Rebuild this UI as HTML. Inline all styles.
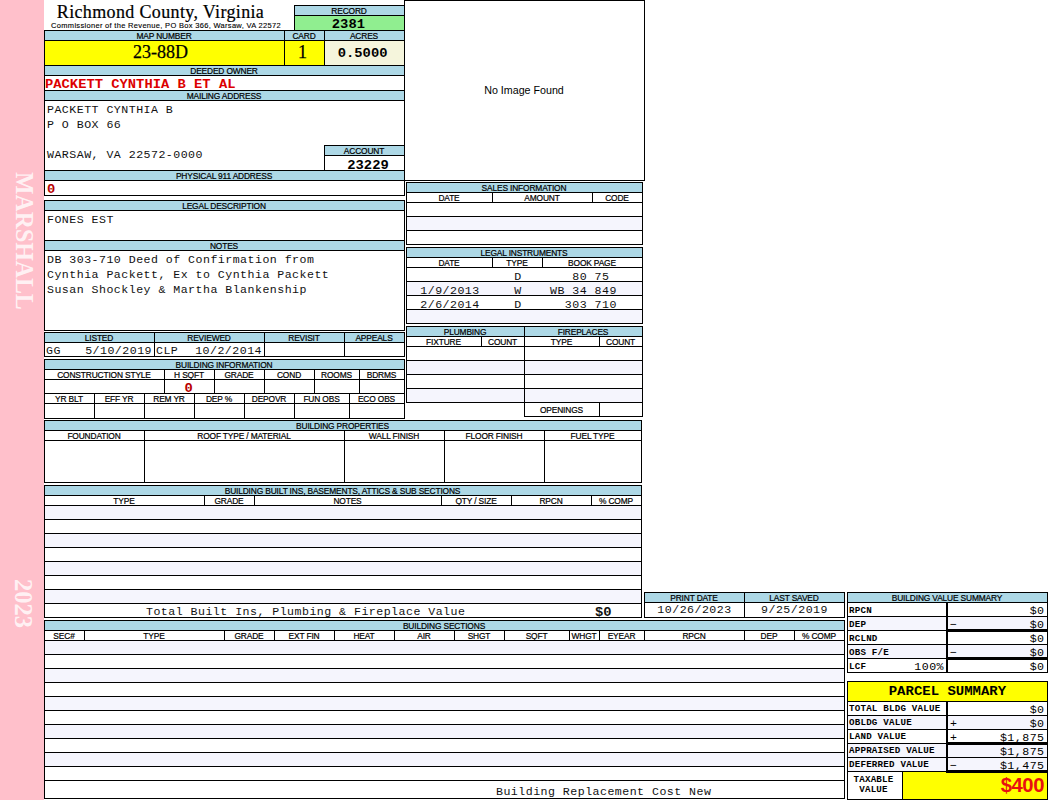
<!DOCTYPE html>
<html lang="en">
<head>
<meta charset="utf-8">
<title>Richmond County, Virginia - Property Card 23-88D</title>
<style>
html,body{margin:0;padding:0;background:#fff}
body{width:1050px;height:800px;position:relative;overflow:hidden;font-family:"Liberation Sans",sans-serif;color:#000}
.c{position:absolute;box-sizing:border-box;border:1px solid #000;background:#fff;overflow:hidden;white-space:nowrap}
.c p{margin:0}
.h{background:#ADD8E6;font-size:8.4px;line-height:8px;text-align:center;letter-spacing:-0.15px;-webkit-text-stroke:0.2px #000}
.h span{position:relative;top:1.0px;left:-0.5px} .op span{top:3px}
.w{background:#fff}
.t{background:#F5F5FD}
.y{background:#FFFF00}
.g{background:#90EE90}
.bg{background:#F5F5DC}
.side{position:absolute;left:0;top:0;width:44px;height:800px;background:#FFC0CB}
.vt{position:absolute;font-family:"Liberation Serif",serif;color:rgba(255,255,255,.8);white-space:nowrap;transform-origin:0 0;transform:rotate(90deg);line-height:1}
.v1{left:36.9px;top:172px;font-size:23.85px;font-weight:bold;transform:rotate(90deg) scale(1,1.1)}
.v2{left:35px;top:579px;font-size:24.5px;font-weight:bold}
.title{position:absolute;left:44.5px;top:1.5px;width:232px;text-align:center;font-family:"Liberation Serif",serif;font-size:18px;letter-spacing:0.35px;line-height:20px;white-space:nowrap;-webkit-text-stroke:0.2px #000}
.sub{position:absolute;left:44px;top:21px;width:244px;text-align:center;font-size:7.5px;letter-spacing:0.31px;line-height:9px;white-space:nowrap;-webkit-text-stroke:0.12px #000}
.m{font-family:"Liberation Mono",monospace;font-size:11.6px;letter-spacing:0.47px;color:#111}
.mb{font-family:"Liberation Mono",monospace;font-weight:bold;font-size:12.0px;letter-spacing:0px}
.ctr{text-align:center}
.lft{text-align:left;padding-left:0px}
.red{color:#DC0000} .dk{color:#B80000} .z span{left:1.5px}
.big{font-family:"Liberation Serif",serif;font-size:18px;line-height:23px;-webkit-text-stroke:0.25px #000}
.big span{position:relative;top:0px;left:-4px} .big+.big span{left:-2px}
.mb span{position:relative;display:inline-block;transform:scaleX(1.15)} .mb.lft span{transform-origin:0 50%}
.g.mb{line-height:13px} .g.mb span{top:3px;left:-1px}
.bg.mb{line-height:23px} .bg.mb span{top:1.5px;left:-2px}
.mb.lft{line-height:13px} .mb.lft span{top:3px}
.mb.ctr{line-height:13px} .mb.ctr span{top:3.5px;left:3.5px}
.bg.mb.ctr{line-height:23px} .bg.mb.ctr span{top:1.5px;left:-2px} .g.mb.ctr span{top:3px;left:-1px}
.addr{padding:1px 0 0 2px;line-height:15px;white-space:pre}
.lr{line-height:13px}
.lr span:first-child{position:absolute;left:1px;top:1px}
.lr span:last-child{position:absolute;right:2px;top:1px}
.hs{line-height:12px} .mb.ctr.hs span{top:2.5px;left:-1px}
.tot{line-height:13px}
.tot .tl{position:absolute;left:101px;top:1px}
.tot .tv{position:absolute;left:550px;top:2.5px;font-weight:bold;font-size:12.0px;letter-spacing:0px;transform:scaleX(1.15);transform-origin:0 50%}
.img{font-size:10.7px;text-align:center;line-height:179px;text-indent:-1px}
.li{line-height:13px;white-space:pre}
.li span{top:2px}
.li .d{position:absolute;left:0;width:86px;text-align:center}
.li .ty{position:absolute;left:86px;width:50px;text-align:center}
.li .bp{position:absolute;left:143px}
.brc{line-height:19px}
.brc span{position:absolute;left:451px;top:1px}
.sl,.sv{font-family:"Liberation Mono",monospace;line-height:13px}
.sl{font-weight:bold;font-size:9.2px;letter-spacing:0.2px}
.sl .l{position:absolute;left:1px;top:1px}
.pl .l{top:0px !important} .sl .p{position:absolute;right:3px;top:1px;font-weight:normal;font-size:11.6px;letter-spacing:0.47px}
.sv{font-size:11.6px;letter-spacing:0.47px}
.sv .s{position:absolute;left:3px;top:1px}
.sv .v{position:absolute;right:2.5px;top:1px}
.ps{font-family:"Liberation Mono",monospace;font-weight:bold;font-size:12px;line-height:18px}
.ps span{position:relative;top:1px;display:inline-block;transform:scaleX(1.164)}
.tx{font-family:"Liberation Mono",monospace;font-weight:bold;font-size:9.2px;letter-spacing:0.2px;line-height:10px;text-align:center;padding:3px 3px 0 0}
.tv400{font-weight:bold;font-size:20.3px;letter-spacing:-0.45px;color:#E81010;text-align:right;padding-right:3px;line-height:26px}
.tk{position:absolute;background:#000}
</style>
</head>
<body>
<div class="side"></div>
<div class="vt v1">MARSHALL</div>
<div class="vt v2">2023</div>
<div class="title">Richmond County, Virginia</div>
<div class="sub">Commissioner of the Revenue, PO Box 366, Warsaw, VA 22572</div>
<div class="c h" style="left:294px;top:5px;width:111px;height:11px;"><span>RECORD</span></div>
<div class="c g mb ctr" style="left:294px;top:15px;width:111px;height:16px;"><span>2381</span></div>
<div class="c h" style="left:44px;top:30px;width:241px;height:11px;"><span>MAP NUMBER</span></div>
<div class="c h" style="left:284px;top:30px;width:41px;height:11px;"><span>CARD</span></div>
<div class="c h" style="left:324px;top:30px;width:81px;height:11px;"><span>ACRES</span></div>
<div class="c y big ctr" style="left:44px;top:40px;width:241px;height:26px;"><span>23-88D</span></div>
<div class="c y big ctr" style="left:284px;top:40px;width:41px;height:26px;"><span>1</span></div>
<div class="c bg mb ctr" style="left:324px;top:40px;width:81px;height:26px;"><span>0.5000</span></div>
<div class="c h" style="left:44px;top:65px;width:361px;height:11px;"><span>DEEDED OWNER</span></div>
<div class="c mb red lft" style="left:44px;top:75px;width:361px;height:16px;"><span>PACKETT CYNTHIA B ET AL</span></div>
<div class="c h" style="left:44px;top:90px;width:361px;height:11px;"><span>MAILING ADDRESS</span></div>
<div class="c m addr" style="left:44px;top:100px;width:361px;height:71px;"><p>PACKETT CYNTHIA B</p><p>P O BOX 66</p><p>&nbsp;</p><p>WARSAW, VA 22572-0000</p></div>
<div class="c h" style="left:324px;top:145px;width:81px;height:11px;"><span>ACCOUNT</span></div>
<div class="c mb ctr" style="left:324px;top:155px;width:81px;height:16px;"><span>23229</span></div>
<div class="c h" style="left:44px;top:170px;width:361px;height:11px;"><span>PHYSICAL 911 ADDRESS</span></div>
<div class="c mb red dk lft z" style="left:44px;top:180px;width:361px;height:16px;"><span>0</span></div>
<div class="c h" style="left:44px;top:200px;width:361px;height:11px;"><span>LEGAL DESCRIPTION</span></div>
<div class="c m addr legal" style="left:44px;top:210px;width:361px;height:31px;"><p>FONES EST</p></div>
<div class="c h" style="left:44px;top:240px;width:361px;height:11px;"><span>NOTES</span></div>
<div class="c m addr notes" style="left:44px;top:250px;width:361px;height:81px;"><p>DB 303-710 Deed of Confirmation from</p><p>Cynthia Packett, Ex to Cynthia Packett</p><p>Susan Shockley &amp; Martha Blankenship</p></div>
<div class="c h" style="left:44px;top:332px;width:111px;height:11px;"><span>LISTED</span></div>
<div class="c h" style="left:154px;top:332px;width:111px;height:11px;"><span>REVIEWED</span></div>
<div class="c h" style="left:264px;top:332px;width:81px;height:11px;"><span>REVISIT</span></div>
<div class="c h" style="left:344px;top:332px;width:61px;height:11px;"><span>APPEALS</span></div>
<div class="c m lr" style="left:44px;top:342px;width:111px;height:15px;"><span>GG</span><span>5/10/2019</span></div>
<div class="c m lr" style="left:154px;top:342px;width:111px;height:15px;"><span>CLP</span><span>10/2/2014</span></div>
<div class="c " style="left:264px;top:342px;width:81px;height:15px;"></div>
<div class="c " style="left:344px;top:342px;width:61px;height:15px;"></div>
<div class="c h" style="left:44px;top:359px;width:361px;height:11px;"><span>BUILDING INFORMATION</span></div>
<div class="c h w" style="left:44px;top:369px;width:121px;height:11px;"><span>CONSTRUCTION STYLE</span></div>
<div class="c h w" style="left:164px;top:369px;width:51px;height:11px;"><span>H SQFT</span></div>
<div class="c h w" style="left:214px;top:369px;width:51px;height:11px;"><span>GRADE</span></div>
<div class="c h w" style="left:264px;top:369px;width:51px;height:11px;"><span>COND</span></div>
<div class="c h w" style="left:314px;top:369px;width:46px;height:11px;"><span>ROOMS</span></div>
<div class="c h w" style="left:359px;top:369px;width:46px;height:11px;"><span>BDRMS</span></div>
<div class="c mb red dk ctr hs" style="left:44px;top:379px;width:121px;height:15px;"></div>
<div class="c mb red dk ctr hs" style="left:164px;top:379px;width:51px;height:15px;"><span>0</span></div>
<div class="c mb red dk ctr hs" style="left:214px;top:379px;width:51px;height:15px;"></div>
<div class="c mb red dk ctr hs" style="left:264px;top:379px;width:51px;height:15px;"></div>
<div class="c mb red dk ctr hs" style="left:314px;top:379px;width:46px;height:15px;"></div>
<div class="c mb red dk ctr hs" style="left:359px;top:379px;width:46px;height:15px;"></div>
<div class="c h w" style="left:44px;top:393px;width:51px;height:11px;"><span>YR BLT</span></div>
<div class="c h w" style="left:94px;top:393px;width:51px;height:11px;"><span>EFF YR</span></div>
<div class="c h w" style="left:144px;top:393px;width:51px;height:11px;"><span>REM YR</span></div>
<div class="c h w" style="left:194px;top:393px;width:51px;height:11px;"><span>DEP %</span></div>
<div class="c h w" style="left:244px;top:393px;width:51px;height:11px;"><span>DEPOVR</span></div>
<div class="c h w" style="left:294px;top:393px;width:56px;height:11px;"><span>FUN OBS</span></div>
<div class="c h w" style="left:349px;top:393px;width:56px;height:11px;"><span>ECO OBS</span></div>
<div class="c " style="left:44px;top:403px;width:51px;height:16px;"></div>
<div class="c " style="left:94px;top:403px;width:51px;height:16px;"></div>
<div class="c " style="left:144px;top:403px;width:51px;height:16px;"></div>
<div class="c " style="left:194px;top:403px;width:51px;height:16px;"></div>
<div class="c " style="left:244px;top:403px;width:51px;height:16px;"></div>
<div class="c " style="left:294px;top:403px;width:56px;height:16px;"></div>
<div class="c " style="left:349px;top:403px;width:56px;height:16px;"></div>
<div class="c h" style="left:44px;top:420px;width:598px;height:11px;"><span>BUILDING PROPERTIES</span></div>
<div class="c h w" style="left:44px;top:430px;width:101px;height:11px;"><span>FOUNDATION</span></div>
<div class="c h w" style="left:144px;top:430px;width:201px;height:11px;"><span>ROOF TYPE / MATERIAL</span></div>
<div class="c h w" style="left:344px;top:430px;width:101px;height:11px;"><span>WALL FINISH</span></div>
<div class="c h w" style="left:444px;top:430px;width:101px;height:11px;"><span>FLOOR FINISH</span></div>
<div class="c h w" style="left:544px;top:430px;width:98px;height:11px;"><span>FUEL TYPE</span></div>
<div class="c " style="left:44px;top:440px;width:101px;height:43px;"></div>
<div class="c " style="left:144px;top:440px;width:201px;height:43px;"></div>
<div class="c " style="left:344px;top:440px;width:101px;height:43px;"></div>
<div class="c " style="left:444px;top:440px;width:101px;height:43px;"></div>
<div class="c " style="left:544px;top:440px;width:98px;height:43px;"></div>
<div class="c h" style="left:44px;top:485px;width:598px;height:11px;"><span>BUILDING BUILT INS, BASEMENTS, ATTICS &amp; SUB SECTIONS</span></div>
<div class="c h w" style="left:44px;top:495px;width:161px;height:11px;"><span>TYPE</span></div>
<div class="c h w" style="left:204px;top:495px;width:51px;height:11px;"><span>GRADE</span></div>
<div class="c h w" style="left:254px;top:495px;width:188px;height:11px;"><span>NOTES</span></div>
<div class="c h w" style="left:441px;top:495px;width:71px;height:11px;"><span>QTY / SIZE</span></div>
<div class="c h w" style="left:511px;top:495px;width:81px;height:11px;"><span>RPCN</span></div>
<div class="c h w" style="left:591px;top:495px;width:51px;height:11px;"><span>% COMP</span></div>
<div class="c t" style="left:44px;top:505px;width:598px;height:15px;"></div>
<div class="c " style="left:44px;top:519px;width:598px;height:15px;"></div>
<div class="c t" style="left:44px;top:533px;width:598px;height:15px;"></div>
<div class="c " style="left:44px;top:547px;width:598px;height:15px;"></div>
<div class="c t" style="left:44px;top:561px;width:598px;height:15px;"></div>
<div class="c " style="left:44px;top:575px;width:598px;height:15px;"></div>
<div class="c t" style="left:44px;top:589px;width:598px;height:15px;"></div>
<div class="c m tot" style="left:44px;top:603px;width:598px;height:15px;"><span class="tl">Total Built Ins, Plumbing &amp; Fireplace Value</span><span class="tv">$0</span></div>
<div class="c img" style="left:404px;top:0px;width:241px;height:181px;"><span>No Image Found</span></div>
<div class="c h" style="left:406px;top:182px;width:237px;height:11px;"><span>SALES INFORMATION</span></div>
<div class="c h w" style="left:406px;top:192px;width:87px;height:11px;"><span>DATE</span></div>
<div class="c h w" style="left:492px;top:192px;width:101px;height:11px;"><span>AMOUNT</span></div>
<div class="c h w" style="left:592px;top:192px;width:51px;height:11px;"><span>CODE</span></div>
<div class="c " style="left:406px;top:202px;width:237px;height:15px;"></div>
<div class="c t" style="left:406px;top:216px;width:237px;height:15px;"></div>
<div class="c " style="left:406px;top:230px;width:237px;height:15px;"></div>
<div class="c h" style="left:406px;top:247px;width:237px;height:11px;"><span>LEGAL INSTRUMENTS</span></div>
<div class="c h w" style="left:406px;top:257px;width:87px;height:11px;"><span>DATE</span></div>
<div class="c h w" style="left:492px;top:257px;width:51px;height:11px;"><span>TYPE</span></div>
<div class="c h w" style="left:542px;top:257px;width:101px;height:11px;"><span>BOOK PAGE</span></div>
<div class="c m li" style="left:406px;top:267px;width:237px;height:15px;"><span class="d"></span><span class="ty">D</span><span class="bp">   80 75</span></div>
<div class="c t m li" style="left:406px;top:281px;width:237px;height:15px;"><span class="d">1/9/2013</span><span class="ty">W</span><span class="bp">WB 34 849</span></div>
<div class="c m li" style="left:406px;top:295px;width:237px;height:15px;"><span class="d">2/6/2014</span><span class="ty">D</span><span class="bp">  303 710</span></div>
<div class="c t m li" style="left:406px;top:309px;width:237px;height:15px;"><span class="d"></span><span class="ty"></span><span class="bp"></span></div>
<div class="c h" style="left:406px;top:326px;width:119px;height:11px;"><span>PLUMBING</span></div>
<div class="c h" style="left:524px;top:326px;width:119px;height:11px;"><span>FIREPLACES</span></div>
<div class="c h w" style="left:406px;top:336px;width:76px;height:11px;"><span>FIXTURE</span></div>
<div class="c h w" style="left:481px;top:336px;width:44px;height:11px;"><span>COUNT</span></div>
<div class="c h w" style="left:524px;top:336px;width:76px;height:11px;"><span>TYPE</span></div>
<div class="c h w" style="left:599px;top:336px;width:44px;height:11px;"><span>COUNT</span></div>
<div class="c " style="left:406px;top:346px;width:119px;height:15px;"></div>
<div class="c " style="left:524px;top:346px;width:119px;height:15px;"></div>
<div class="c t" style="left:406px;top:360px;width:119px;height:15px;"></div>
<div class="c t" style="left:524px;top:360px;width:119px;height:15px;"></div>
<div class="c " style="left:406px;top:374px;width:119px;height:15px;"></div>
<div class="c " style="left:524px;top:374px;width:119px;height:15px;"></div>
<div class="c t" style="left:406px;top:388px;width:119px;height:15px;"></div>
<div class="c t" style="left:524px;top:388px;width:119px;height:15px;"></div>
<div class="c h w op" style="left:524px;top:402px;width:76px;height:15px;"><span>OPENINGS</span></div>
<div class="c " style="left:599px;top:402px;width:44px;height:15px;"></div>
<div class="c h" style="left:644px;top:592px;width:101px;height:11px;"><span>PRINT DATE</span></div>
<div class="c h" style="left:744px;top:592px;width:101px;height:11px;"><span>LAST SAVED</span></div>
<div class="c m ctr" style="left:644px;top:602px;width:101px;height:16px;"><span>10/26/2023</span></div>
<div class="c m ctr" style="left:744px;top:602px;width:101px;height:16px;"><span>9/25/2019</span></div>
<div class="c h" style="left:44px;top:620px;width:801px;height:11px;"><span>BUILDING SECTIONS</span></div>
<div class="c h w" style="left:44px;top:630px;width:41px;height:11px;"><span>SEC#</span></div>
<div class="c h w" style="left:84px;top:630px;width:141px;height:11px;"><span>TYPE</span></div>
<div class="c h w" style="left:224px;top:630px;width:51px;height:11px;"><span>GRADE</span></div>
<div class="c h w" style="left:274px;top:630px;width:61px;height:11px;"><span>EXT FIN</span></div>
<div class="c h w" style="left:334px;top:630px;width:61px;height:11px;"><span>HEAT</span></div>
<div class="c h w" style="left:394px;top:630px;width:61px;height:11px;"><span>AIR</span></div>
<div class="c h w" style="left:454px;top:630px;width:51px;height:11px;"><span>SHGT</span></div>
<div class="c h w" style="left:504px;top:630px;width:66px;height:11px;"><span>SQFT</span></div>
<div class="c h w" style="left:569px;top:630px;width:31px;height:11px;"><span>WHGT</span></div>
<div class="c h w" style="left:599px;top:630px;width:46px;height:11px;"><span>EYEAR</span></div>
<div class="c h w" style="left:644px;top:630px;width:101px;height:11px;"><span>RPCN</span></div>
<div class="c h w" style="left:744px;top:630px;width:51px;height:11px;"><span>DEP</span></div>
<div class="c h w" style="left:794px;top:630px;width:51px;height:11px;"><span>% COMP</span></div>
<div class="c t" style="left:44px;top:640px;width:801px;height:15px;"></div>
<div class="c " style="left:44px;top:654px;width:801px;height:15px;"></div>
<div class="c t" style="left:44px;top:668px;width:801px;height:15px;"></div>
<div class="c " style="left:44px;top:682px;width:801px;height:15px;"></div>
<div class="c t" style="left:44px;top:696px;width:801px;height:15px;"></div>
<div class="c " style="left:44px;top:710px;width:801px;height:15px;"></div>
<div class="c t" style="left:44px;top:724px;width:801px;height:15px;"></div>
<div class="c " style="left:44px;top:738px;width:801px;height:15px;"></div>
<div class="c t" style="left:44px;top:752px;width:801px;height:15px;"></div>
<div class="c " style="left:44px;top:766px;width:801px;height:15px;"></div>
<div class="c m brc" style="left:44px;top:780px;width:801px;height:19px;"><span>Building Replacement Cost New</span></div>
<div class="c h" style="left:847px;top:592px;width:201px;height:11px;"><span>BUILDING VALUE SUMMARY</span></div>
<div class="c sl" style="left:847px;top:602px;width:101px;height:15px;"><span class="l">RPCN</span><span class="p"></span></div>
<div class="c sv" style="left:946px;top:602px;width:102px;height:15px;"><span class="s"></span><span class="v">$0</span></div>
<div class="c t sl" style="left:847px;top:616px;width:101px;height:15px;"><span class="l">DEP</span><span class="p"></span></div>
<div class="c t sv" style="left:946px;top:616px;width:102px;height:15px;"><span class="s">&minus;</span><span class="v">$0</span></div>
<div class="c sl" style="left:847px;top:630px;width:101px;height:15px;"><span class="l">RCLND</span><span class="p"></span></div>
<div class="c sv" style="left:946px;top:630px;width:102px;height:15px;"><span class="s"></span><span class="v">$0</span></div>
<div class="c t sl" style="left:847px;top:644px;width:101px;height:15px;"><span class="l">OBS F/E</span><span class="p"></span></div>
<div class="c t sv" style="left:946px;top:644px;width:102px;height:15px;"><span class="s">&minus;</span><span class="v">$0</span></div>
<div class="c sl" style="left:847px;top:658px;width:101px;height:15px;"><span class="l">LCF</span><span class="p">100%</span></div>
<div class="c sv" style="left:946px;top:658px;width:102px;height:15px;"><span class="s"></span><span class="v">$0</span></div>
<div class="c y ps ctr" style="left:847px;top:681px;width:201px;height:21px;"><span>PARCEL SUMMARY</span></div>
<div class="c sl pl" style="left:847px;top:701px;width:101px;height:15px;"><span class="l">TOTAL BLDG VALUE</span></div>
<div class="c sv" style="left:946px;top:701px;width:102px;height:15px;"><span class="s"></span><span class="v">$0</span></div>
<div class="c t sl pl" style="left:847px;top:715px;width:101px;height:15px;"><span class="l">OBLDG VALUE</span></div>
<div class="c t sv" style="left:946px;top:715px;width:102px;height:15px;"><span class="s">+</span><span class="v">$0</span></div>
<div class="c sl pl" style="left:847px;top:729px;width:101px;height:15px;"><span class="l">LAND VALUE</span></div>
<div class="c sv" style="left:946px;top:729px;width:102px;height:15px;"><span class="s">+</span><span class="v">$1,875</span></div>
<div class="c t sl pl" style="left:847px;top:743px;width:101px;height:15px;"><span class="l">APPRAISED VALUE</span></div>
<div class="c t sv" style="left:946px;top:743px;width:102px;height:15px;"><span class="s"></span><span class="v">$1,875</span></div>
<div class="c t sl pl" style="left:847px;top:757px;width:101px;height:15px;"><span class="l">DEFERRED VALUE</span></div>
<div class="c t sv" style="left:946px;top:757px;width:102px;height:15px;"><span class="s">&minus;</span><span class="v">$1,475</span></div>
<div class="c tx" style="left:847px;top:771px;width:56px;height:29px;"><span>TAXABLE<br>VALUE</span></div>
<div class="c y tv400" style="left:902px;top:771px;width:146px;height:29px;"><span>$400</span></div>
<div class="tk" style="left:946px;top:629px;width:102px;height:3px"></div>
<div class="tk" style="left:946px;top:657px;width:102px;height:3px"></div>
<div class="tk" style="left:946px;top:742px;width:102px;height:3px"></div>
<div class="tk" style="left:946px;top:770px;width:102px;height:3px"></div>
<div class="tk" style="left:946px;top:602px;width:2px;height:71px"></div>
<div class="tk" style="left:946px;top:701px;width:2px;height:71px"></div>
</body>
</html>
